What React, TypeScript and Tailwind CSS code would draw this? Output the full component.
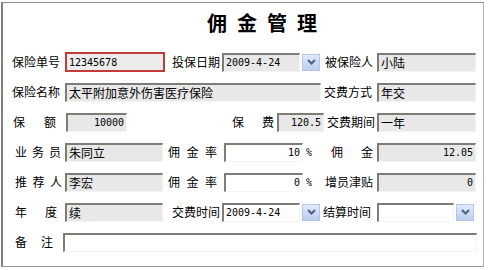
import type { ReactNode } from "react";

const sunk =
  "border-t-2 border-l-2 border-r border-b border-t-[#7d7d75] border-l-[#7d7d75] border-r-[#f4f4f4] border-b-[#f4f4f4]";
const mono = "font-['DejaVu_Sans_Mono',monospace] text-[10px]";

function Label({ text, className }: { text: string; className: string }) {
  const chars = text.split(" ");
  if (chars.length > 1) {
    return (
      <div className={`flex justify-between text-[12px] leading-none ${className}`}>
        {chars.map((c, i) => (
          <span key={i}>{c}</span>
        ))}
      </div>
    );
  }
  return <div className={`text-[12px] leading-none whitespace-nowrap ${className}`}>{text}</div>;
}

function Box({
  className,
  children,
  white,
  right,
}: {
  className: string;
  children?: ReactNode;
  white?: boolean;
  right?: boolean;
}) {
  return (
    <div
      className={`${sunk} h-[19px] flex items-center px-[2px] overflow-hidden whitespace-nowrap text-[12px] leading-none ${
        white ? "bg-white" : "bg-[#e8e8e8]"
      } ${right ? "justify-end" : ""} ${className}`}
    >
      {children}
    </div>
  );
}

function Drop({ className }: { className: string }) {
  return (
    <div
      className={`w-[18px] h-[17px] border border-[#b6c6e8] bg-linear-to-b from-[#e2eafa] to-[#bccdf0] flex items-center justify-center ${className}`}
    >
      <svg width="9" height="6" viewBox="0 0 9 6">
        <path d="M1 1 L4.5 4.5 L8 1" stroke="#4b5f8c" strokeWidth="2" fill="none" />
      </svg>
    </div>
  );
}

export default function App() {
  return (
    <div className="w-[489px] h-[270px] bg-white text-black font-['Noto_Sans_CJK_SC',sans-serif] overflow-hidden">
      <div className="ml-[1px] mt-[2px] w-[483px] h-[265px] border-l-2 border-t border-r border-b border-l-[#808080] border-t-[#8c8c8c] border-r-[#b4b4b4] border-b-[#9a9a9a]">
        {/* 标题 */}
        <div className="h-[44px] pt-[10px] flex">
          <div className="ml-[204px] flex gap-[10px] text-[20px] leading-[20px] font-bold">
            <span>佣</span>
            <span>金</span>
            <span>管</span>
            <span>理</span>
          </div>
        </div>

        {/* 第一行 */}
        <div className="flex items-center h-[30px]">
          <Label text="保险单号" className="ml-[9px] w-[48px]" />
          <div className="ml-[5px] w-[100px] h-[20px] border-2 border-[#c23a3a] bg-[#ececec] flex items-center px-[2px]">
            <span className={mono}>12345678</span>
          </div>
          <Label text="投保日期" className="ml-[7px] w-[48px]" />
          <Box className="ml-[2px] w-[78px]">
            <span className={mono}>2009-4-24</span>
          </Box>
          <Drop className="ml-[2px]" />
          <Label text="被保险人" className="ml-[5px] w-[48px]" />
          <Box className="ml-[4px] w-[99px]">小陆</Box>
        </div>

        {/* 第二行 */}
        <div className="flex items-center h-[30px]">
          <Label text="保险名称" className="ml-[9px] w-[48px]" />
          <Box className="ml-[5px] w-[256px]">太平附加意外伤害医疗保险</Box>
          <Label text="交费方式" className="ml-[3px] w-[48px]" />
          <Box className="ml-[5px] w-[99px]">年交</Box>
        </div>

        {/* 第三行 */}
        <div className="flex items-center h-[30px]">
          <Label text="保 额" className="ml-[10px] w-[43px]" />
          <Box className="ml-[10px] w-[61px]" right>
            <span className={mono}>10000</span>
          </Box>
          <Label text="保 费" className="ml-[105px] w-[42px]" />
          <Box className="ml-[3px] w-[47px]" right>
            <span className={mono}>120.5</span>
          </Box>
          <Label text="交费期间" className="ml-[3px] w-[48px]" />
          <Box className="ml-[2px] w-[99px]">一年</Box>
        </div>

        {/* 第四行 */}
        <div className="flex items-center h-[30px]">
          <Label text="业 务 员" className="ml-[12px] w-[46px]" />
          <Box className="ml-[4px] w-[98px]">朱同立</Box>
          <Label text="佣 金 率" className="ml-[5px] w-[49px]" />
          <Box className="ml-[7px] w-[79px]" white right>
            <span className={mono}>10</span>
          </Box>
          <span className={`ml-[3px] w-[8px] ${mono}`}>%</span>
          <Label text="佣 金" className="ml-[17px] w-[42px]" />
          <Box className="ml-[4px] w-[99px]" right>
            <span className={mono}>12.05</span>
          </Box>
        </div>

        {/* 第五行 */}
        <div className="flex items-center h-[30px]">
          <Label text="推 荐 人" className="ml-[12px] w-[47px]" />
          <Box className="ml-[3px] w-[98px]">李宏</Box>
          <Label text="佣 金 率" className="ml-[5px] w-[49px]" />
          <Box className="ml-[7px] w-[79px]" white right>
            <span className={mono}>0</span>
          </Box>
          <span className={`ml-[3px] w-[8px] ${mono}`}>%</span>
          <Label text="增员津贴" className="ml-[11px] w-[48px]" />
          <Box className="ml-[4px] w-[99px]" right>
            <span className={mono}>0</span>
          </Box>
        </div>

        {/* 第六行 */}
        <div className="flex items-center h-[30px]">
          <Label text="年 度" className="ml-[12px] w-[42px]" />
          <Box className="ml-[8px] w-[98px]">续</Box>
          <Label text="交费时间" className="ml-[9px] w-[48px]" />
          <Box className="ml-[2px] w-[78px]" white>
            <span className={mono}>2009-4-24</span>
          </Box>
          <Drop className="ml-[2px]" />
          <Label text="结算时间" className="ml-[3px] w-[48px]" />
          <Box className="ml-[6px] w-[77px]" white />
          <Drop className="ml-[2px]" />
        </div>

        {/* 备注 */}
        <div className="flex items-center h-[30px]">
          <Label text="备 注" className="ml-[12px] w-[38px]" />
          <Box className="ml-[10px] w-[414px]" white />
        </div>
      </div>
    </div>
  );
}
